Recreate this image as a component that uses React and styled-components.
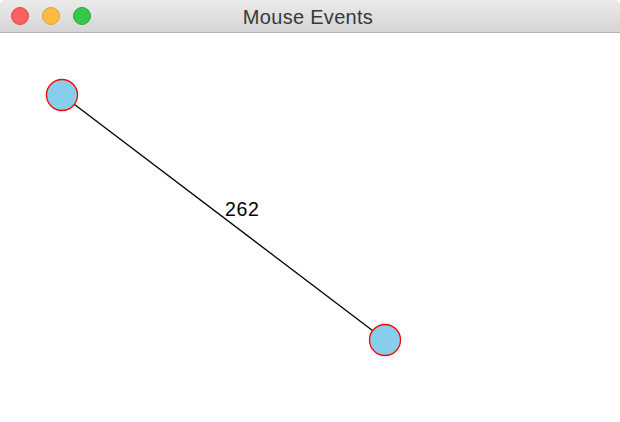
import React from 'react'
import styled, { createGlobalStyle } from 'styled-components'

const Global = createGlobalStyle`
  html, body { margin: 0; padding: 0; background: #ffffff; }
  body { width: 620px; height: 422px; overflow: hidden; }
`

const Window = styled.div`
  width: 620px;
  height: 422px;
  display: flex;
  flex-direction: column;
  background: #ffffff;
  font-family: "Liberation Sans", Arial, sans-serif;
`

const TitleBar = styled.div`
  position: relative;
  flex: none;
  height: 33px;
  box-sizing: border-box;
  display: flex;
  align-items: center;
  justify-content: center;
  background: linear-gradient(#ebebeb, #d5d5d5);
  border-bottom: 1px solid #b1b1b1;
  border-radius: 5px 5px 0 0;
`

const Lights = styled.div`
  position: absolute;
  left: 11px;
  top: 7px;
  display: flex;
  gap: 13px;
`

const Light = styled.span`
  width: 18px;
  height: 18px;
  border-radius: 50%;
  box-sizing: border-box;
  background: ${p => p.color};
  border: 1px solid ${p => p.edge};
`

const Title = styled.div`
  font-size: 20px;
  letter-spacing: 0.3px;
  color: #383838;
  margin-right: 4px;
  padding-top: 2px;
`

const Canvas = styled.svg`
  display: block;
  flex: 1;
`

const a = { x: 62, y: 95 }
const b = { x: 385, y: 340 }

export default function App() {
  return (
    <Window>
      <Global />
      <TitleBar>
        <Lights>
          <Light color="#fc605c" edge="#de4a46" />
          <Light color="#fdbc40" edge="#dea236" />
          <Light color="#34c84a" edge="#27aa36" />
        </Lights>
        <Title>Mouse Events</Title>
      </TitleBar>
      <Canvas width="620" height="389" viewBox="0 33 620 389">
        <line x1={a.x} y1={a.y} x2={b.x} y2={b.y} stroke="#000" strokeWidth="1.3" />
        <text x="225" y="216" fontFamily="Liberation Sans, Arial, sans-serif" fontSize="19.5" letterSpacing="0.6" fill="#000">262</text>
        <circle cx={a.x} cy={a.y} r="15.5" fill="#87ceeb" stroke="#ff0000" strokeWidth="1.3" />
        <circle cx={b.x} cy={b.y} r="15.5" fill="#87ceeb" stroke="#ff0000" strokeWidth="1.3" />
      </Canvas>
    </Window>
  )
}
